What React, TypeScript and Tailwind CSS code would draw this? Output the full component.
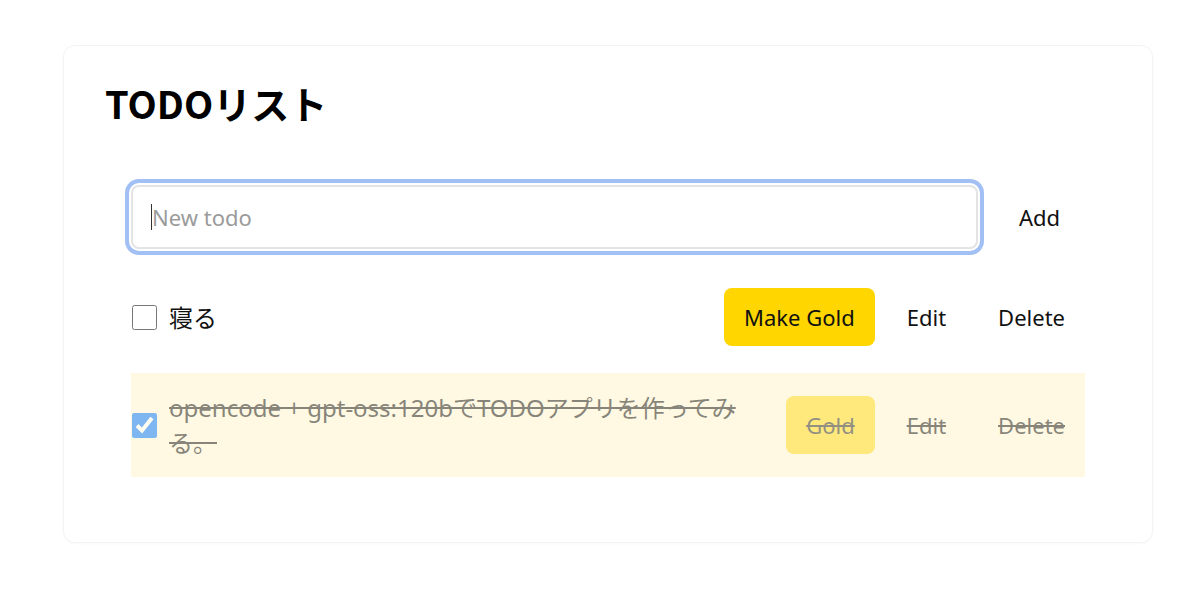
import { useState } from "react";

type Todo = {
  id: number;
  text: string;
  done: boolean;
  gold: boolean;
};

const initialTodos: Todo[] = [
  { id: 1, text: "寝る", done: false, gold: false },
  { id: 2, text: "opencode + gpt-oss:120bでTODOアプリを作ってみる。", done: true, gold: true },
];

export default function App() {
  const [todos, setTodos] = useState(initialTodos);

  function toggle(id: number) {
    setTodos(todos.map((t) => (t.id === id ? { ...t, done: !t.done } : t)));
  }

  return (
    <div
      className="min-h-screen bg-white pt-[45px] text-[#111]"
      style={{ fontFamily: "'Noto Sans', 'Noto Sans CJK JP', sans-serif" }}
    >
      <div className="ml-[63px] w-[1090px] rounded-xl border border-[#f3f3f3] bg-white pb-[65px] pt-[35px] shadow-[0_1px_3px_rgba(0,0,0,0.025)]">
        <h1
          className="pl-[41px] text-[38px] font-bold leading-[44px] text-black"
          style={{ fontFamily: "'Noto Sans CJK JP', sans-serif" }}
        >
          TODOリスト
        </h1>
        <div className="mx-[67px] mt-[60px]">
          <div className="flex items-center gap-4">
            <div className="flex h-[64px] flex-1 items-center rounded-lg border-2 border-[#e4e4e4] bg-white pl-[18px] shadow-[0_0_0_2px_#ffffff,0_0_0_6px_#a2c0f4]">
              <span className="h-[26px] w-px bg-[#333]" />
              <span className="text-[22px] text-[#9b9b9b]">New todo</span>
            </div>
            <button className="px-[25px] py-[15px] text-[22px] leading-[28px]">Add</button>
          </div>
          <ul className="mt-[22px] space-y-2.5">
            {todos.map((t) => (
              <TodoRow key={t.id} todo={t} onToggle={() => toggle(t.id)} />
            ))}
          </ul>
        </div>
      </div>
    </div>
  );
}

function TodoRow({ todo, onToggle }: { todo: Todo; onToggle: () => void }) {
  const dim = todo.done ? "opacity-50 line-through" : "";
  return (
    <li className={`flex items-center gap-3 py-[17px] ${todo.done ? "bg-[#fff9e3]" : ""}`}>
      <input
        type="checkbox"
        checked={todo.done}
        onChange={onToggle}
        className={`ml-px h-[25px] w-[25px] shrink-0 ${todo.done ? "opacity-50" : ""}`}
      />
      <span className={`flex-1 text-[24px] leading-[35px] ${dim}`}>{todo.text}</span>
      <div className="flex shrink-0 items-center gap-3">
        <button
          className={`rounded-lg bg-[#ffd600] px-5 py-[15px] text-[22px] leading-[28px] ${
            todo.done ? "opacity-45 line-through" : ""
          }`}
        >
          {todo.gold ? "Gold" : "Make Gold"}
        </button>
        <button className={`px-5 py-[15px] text-[22px] leading-[28px] ${dim}`}>Edit</button>
        <button className={`px-5 py-[15px] text-[22px] leading-[28px] ${dim}`}>Delete</button>
      </div>
    </li>
  );
}
